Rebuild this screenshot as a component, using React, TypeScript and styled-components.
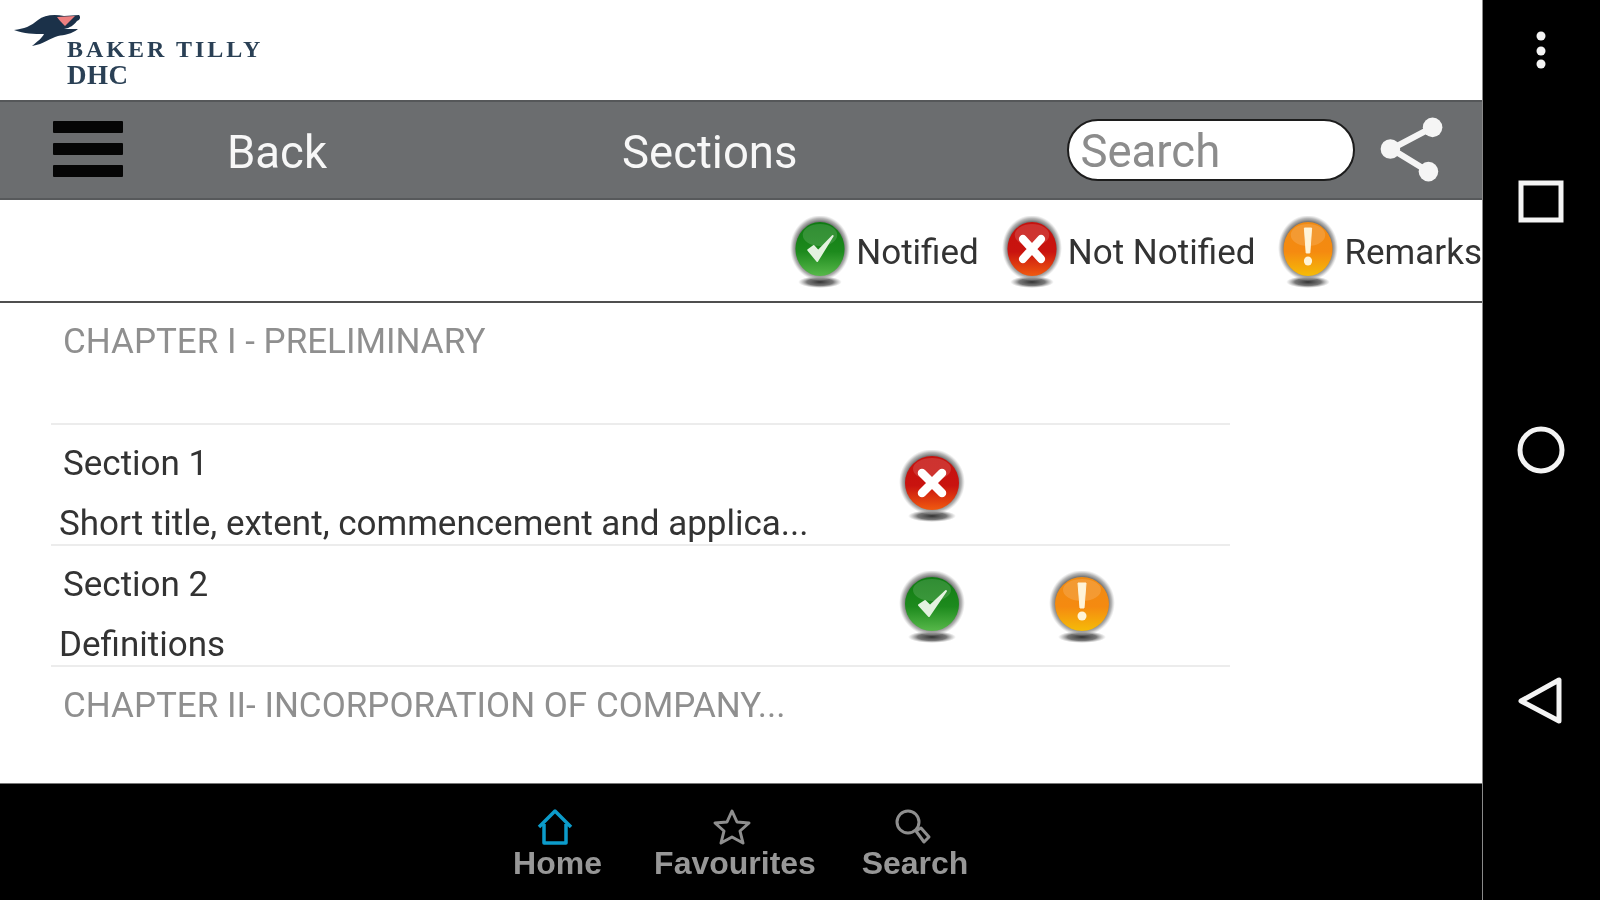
import { FC } from 'react';
import styled, { createGlobalStyle } from 'styled-components';

const GlobalStyle = createGlobalStyle`
  html, body {
    margin: 0;
    padding: 0;
    background: #000;
    overflow: hidden;
  }
`;

const Shell = styled.div`
  width: 1600px;
  height: 900px;
  display: grid;
  grid-template-columns: 1482px 118px;
  font-family: Roboto, "Liberation Sans", sans-serif;
  filter: blur(0.7px);
`;

const Main = styled.div`
  display: flex;
  flex-direction: column;
  background: #fff;
  min-width: 0;
`;

const LogoBar = styled.div`
  height: 100px;
  flex: none;
  display: flex;
  align-items: flex-start;
  padding: 14px 0 0 14px;
  box-sizing: border-box;
`;

const LogoWrap = styled.div`
  display: flex;
  flex-direction: column;
`;

const LogoWords = styled.div`
  margin: -11px 0 0 53px;
  font-family: "Liberation Serif", serif;
  color: #2a4055;
  white-space: nowrap;
  display: flex;
  flex-direction: column;
  gap: 2px;
`;

const LogoLine = styled.div<{ $size: number; $spacing: number }>`
  font-size: ${(p) => p.$size}px;
  letter-spacing: ${(p) => p.$spacing}px;
  line-height: 24px;
  font-weight: 700;
`;

const Toolbar = styled.div`
  height: 100px;
  flex: none;
  box-sizing: border-box;
  display: flex;
  align-items: center;
  background: #6b6d6f;
  border-top: 2px solid #555759;
  border-bottom: 2px solid #57595b;
`;

const Burger = styled.div`
  width: 70px;
  margin: 0 0 2px 53px;
  display: flex;
  flex-direction: column;
  gap: 10px;
`;

const BurgerBar = styled.span`
  display: block;
  height: 12px;
  border-radius: 1px;
  background: #050505;
`;

const ToolbarLabel = styled.div<{ $left: number }>`
  margin-left: ${(p) => p.$left}px;
  padding-top: 6px;
  color: #f7f7f7;
  font-size: 45.5px;
  line-height: 60px;
  white-space: nowrap;
`;

const SearchBox = styled.div`
  margin-left: 270px;
  width: 288px;
  height: 62px;
  box-sizing: border-box;
  border: 2px solid #1c1c1c;
  border-radius: 31px;
  background: #fff;
  color: #8c8c8c;
  font-size: 45.5px;
  line-height: 62px;
  padding-left: 11px;
`;

const ShareIcon = styled.svg`
  margin-left: 22px;
  width: 70px;
  height: 70px;
  flex: none;
`;

const Legend = styled.div`
  height: 103px;
  flex: none;
  box-sizing: border-box;
  display: flex;
  align-items: center;
  justify-content: flex-end;
  border-bottom: 2px solid #4f4f4f;
`;

const LegendItem = styled.div<{ $gap: number }>`
  display: flex;
  align-items: center;
  margin-left: ${(p) => p.$gap}px;
`;

const LegendText = styled.span`
  margin-left: 6px;
  color: #333;
  font-size: 35px;
  white-space: nowrap;
  position: relative;
  top: 2px;
`;

const LegendBadge = styled.div`
  display: flex;
  padding-top: 5px;
`;

const List = styled.div`
  flex: 1;
  min-height: 0;
  width: 1179px;
  margin-left: 51px;
`;

const ChapterRow = styled.div<{ $divider?: boolean; $height: number }>`
  height: ${(p) => p.$height}px;
  box-sizing: border-box;
  padding: 9px 0 0 12px;
  border-top: ${(p) => (p.$divider ? '2px solid #ececec' : 'none')};
  color: #8f8f8f;
  font-size: 35px;
  line-height: 60px;
  white-space: nowrap;
`;

const SectionRow = styled.div`
  height: 121px;
  box-sizing: border-box;
  display: grid;
  grid-template-columns: 846px 150px 70px;
  border-top: 2px solid #ececec;
`;

const SectionText = styled.div`
  padding-top: 9px;
  min-width: 0;
`;

const SectionName = styled.div`
  padding-left: 12px;
  color: #333;
  font-size: 35px;
  line-height: 60px;
  white-space: nowrap;
`;

const SectionTitle = styled.div`
  padding-left: 8px;
  color: #333;
  font-size: 35px;
  line-height: 60px;
  white-space: nowrap;
`;

const StatusCell = styled.div`
  display: flex;
  align-items: center;
  justify-content: center;
  width: 70px;
  padding-bottom: 6px;
`;

const TabBar = styled.div`
  height: 117px;
  flex: none;
  box-sizing: border-box;
  background: #000;
  display: flex;
  justify-content: flex-start;
  padding: 23px 0 0 510px;
  border-top: 1px solid #777;
`;

const Tab = styled.div<{ $width: number }>`
  width: ${(p) => p.$width}px;
  display: flex;
  flex-direction: column;
  align-items: center;
`;

const TabIcon = styled.svg`
  width: 40px;
  height: 40px;
  flex: none;
  margin: 0 6px -1px 0;
`;

const TabLabel = styled.div`
  font-family: "Liberation Sans", Arial, sans-serif;
  font-weight: 700;
  font-size: 32px;
  line-height: 34px;
  color: #979797;
  white-space: nowrap;
`;

const NavRail = styled.div`
  background: #000;
  display: flex;
  flex-direction: column;
  align-items: center;
  border-left: 1px solid #8a8a8a;
  box-sizing: border-box;
  padding-right: 2px;
`;

const NavIcon = styled.svg<{ $top: number }>`
  margin-top: ${(p) => p.$top}px;
  width: 50px;
  height: 50px;
  flex: none;
`;

type Kind = 'ok' | 'no' | 'warn';

const badgeColors: Record<Kind, [string, string, string]> = {
  ok: ['#1d8a1d', '#0f7a12', '#57b84a'],
  no: ['#c9130f', '#c4120e', '#f05a10'],
  warn: ['#f58a10', '#f08a12', '#f5bb08'],
};

const BadgeSvg = styled.svg<{ $narrow?: boolean }>`
  width: ${(p) => (p.$narrow ? 60 : 66)}px;
  height: 74px;
  flex: none;
`;

const Badge: FC<{ kind: Kind; narrow?: boolean }> = ({ kind, narrow }) => {
  const [base, top, bottom] = badgeColors[kind];
  const id = `badge-${kind}`;
  return (
    <BadgeSvg $narrow={narrow} viewBox="0 0 66 74" preserveAspectRatio="none">
      <defs>
        <linearGradient id={id} x1="0" y1="0" x2="0" y2="1">
          <stop offset="0" stopColor={top} />
          <stop offset="0.55" stopColor={base} />
          <stop offset="1" stopColor={bottom} />
        </linearGradient>
        <radialGradient id="badge-shadow" cx="0.5" cy="0.5" r="0.5">
          <stop offset="0" stopColor="#333" />
          <stop offset="0.6" stopColor="#555" stopOpacity="0.8" />
          <stop offset="1" stopColor="#888" stopOpacity="0" />
        </radialGradient>
        <radialGradient id="badge-halo" cx="0.5" cy="0.5" r="0.5">
          <stop offset="0.8" stopColor="#777" />
          <stop offset="0.9" stopColor="#999" stopOpacity="0.7" />
          <stop offset="1" stopColor="#bbb" stopOpacity="0" />
        </radialGradient>
      </defs>
      <ellipse cx="33" cy="66" rx="24" ry="6" fill="url(#badge-shadow)" />
      <circle cx="33" cy="32" r="33" fill="url(#badge-halo)" />
      <circle cx="33" cy="33" r="27" fill={`url(#${id})`} />
      <ellipse cx="33" cy="19" rx="19" ry="11" fill="#fff" opacity="0.14" />
      {kind === 'ok' && (
        <path d="M20 34 L30 45 L47 20 L31 35 L26 30 Z" fill="#e4f2e0" stroke="#e4f2e0" strokeWidth="2" strokeLinejoin="round" />
      )}
      {kind === 'no' && (
        <path d="M23 23 L43 43 M43 23 L23 43" stroke="#fff" strokeWidth="8.5" strokeLinecap="round" />
      )}
      {kind === 'warn' && (
        <>
          <path d="M29 12 L37 12 L35 37 L31 37 Z" fill="#fff4d8" stroke="#fff4d8" strokeLinejoin="round" />
          <circle cx="33" cy="45" r="4.5" fill="#fff4d8" />
        </>
      )}
    </BadgeSvg>
  );
};

const BirdMark = styled.svg`
  width: 70px;
  height: 34px;
  display: block;
`;

const App: FC = () => {
  return (
    <>
      <GlobalStyle />
      <Shell>
        <Main>
          <LogoBar>
            <LogoWrap>
              <BirdMark viewBox="0 0 70 34">
                <path
                  d="M0 16 C10 15 17 12 24 6 C30 1 40 0 50 2 L65 1 C67 3 66 6 63 7 C60 11 56 14 50 15 L64 15 C58 20 50 21 44 22 C36 24 30 30 18 32 C24 27 28 24 30 20 C20 20 10 20 0 16 Z"
                  fill="#1b3149"
                />
                <path d="M43 3 L61 2 L51 12 C48 9 45 6 43 3 Z" fill="#ee8080" />
              </BirdMark>
              <LogoWords>
                <LogoLine $size={24} $spacing={3}>BAKER TILLY</LogoLine>
                <LogoLine $size={27} $spacing={0.5}>DHC</LogoLine>
              </LogoWords>
            </LogoWrap>
          </LogoBar>

          <Toolbar>
            <Burger>
              <BurgerBar />
              <BurgerBar />
              <BurgerBar />
            </Burger>
            <ToolbarLabel $left={104}>Back</ToolbarLabel>
            <ToolbarLabel $left={295}>Sections</ToolbarLabel>
            <SearchBox>Search</SearchBox>
            <ShareIcon viewBox="0 0 68 68">
              <path d="M54 12 L14 33 L50 55" fill="none" stroke="#f5f5f5" strokeWidth="6" />
              <circle cx="54" cy="12" r="9.5" fill="#f5f5f5" />
              <circle cx="13" cy="33" r="9.5" fill="#f5f5f5" />
              <circle cx="50" cy="55" r="9.5" fill="#f5f5f5" />
            </ShareIcon>
          </Toolbar>

          <Legend>
            <LegendItem $gap={0}>
              <LegendBadge>
                <Badge kind="ok" narrow />
              </LegendBadge>
              <LegendText>Notified</LegendText>
            </LegendItem>
            <LegendItem $gap={23}>
              <LegendBadge>
                <Badge kind="no" narrow />
              </LegendBadge>
              <LegendText>Not Notified</LegendText>
            </LegendItem>
            <LegendItem $gap={23}>
              <LegendBadge>
                <Badge kind="warn" narrow />
              </LegendBadge>
              <LegendText>Remarks</LegendText>
            </LegendItem>
          </Legend>

          <List>
            <ChapterRow $height={120}>CHAPTER I - PRELIMINARY</ChapterRow>
            <SectionRow>
              <SectionText>
                <SectionName>Section 1</SectionName>
                <SectionTitle>Short title, extent, commencement and applica...</SectionTitle>
              </SectionText>
              <StatusCell>
                <Badge kind="no" />
              </StatusCell>
            </SectionRow>
            <SectionRow>
              <SectionText>
                <SectionName>Section 2</SectionName>
                <SectionTitle>Definitions</SectionTitle>
              </SectionText>
              <StatusCell>
                <Badge kind="ok" />
              </StatusCell>
              <StatusCell>
                <Badge kind="warn" />
              </StatusCell>
            </SectionRow>
            <ChapterRow $divider $height={116}>CHAPTER II- INCORPORATION OF COMPANY...</ChapterRow>
          </List>

          <TabBar>
            <Tab $width={95}>
              <TabIcon viewBox="0 0 40 40">
                <path d="M4 20 L20 4 L36 20 M9 17 V36 H31 V17" fill="none" stroke="#0c9ccb" strokeWidth="3.5" strokeLinejoin="round" />
              </TabIcon>
              <TabLabel>Home</TabLabel>
            </Tab>
            <Tab $width={260}>
              <TabIcon viewBox="0 0 40 40">
                <path d="M20 4 L25 15 L37 16 L28 24 L31 36 L20 30 L9 36 L12 24 L3 16 L15 15 Z" fill="none" stroke="#8e8e8e" strokeWidth="3" strokeLinejoin="round" />
              </TabIcon>
              <TabLabel>Favourites</TabLabel>
            </Tab>
            <Tab $width={100}>
              <TabIcon viewBox="0 0 40 40">
                <circle cx="16" cy="15" r="11" fill="none" stroke="#8e8e8e" strokeWidth="3" />
                <path d="M24 24 L29 21 L37 30 L32 35 Z" fill="none" stroke="#8e8e8e" strokeWidth="3" strokeLinejoin="round" />
              </TabIcon>
              <TabLabel>Search</TabLabel>
            </Tab>
          </TabBar>
        </Main>

        <NavRail>
          <NavIcon $top={29} viewBox="0 0 50 50">
            <circle cx="25" cy="7" r="4.5" fill="#f4f4f4" />
            <circle cx="25" cy="22" r="4.5" fill="#f4f4f4" />
            <circle cx="25" cy="35" r="4.5" fill="#f4f4f4" />
          </NavIcon>
          <NavIcon $top={99} viewBox="0 0 50 50">
            <rect x="5" y="5" width="40" height="37" fill="none" stroke="#f4f4f4" strokeWidth="5" />
          </NavIcon>
          <NavIcon $top={197} viewBox="0 0 50 50">
            <circle cx="25" cy="25" r="21" fill="none" stroke="#f4f4f4" strokeWidth="5" />
          </NavIcon>
          <NavIcon $top={201} viewBox="0 0 50 50">
            <path d="M43 4 V45 L5 25 Z" fill="none" stroke="#f4f4f4" strokeWidth="5" strokeLinejoin="round" />
          </NavIcon>
        </NavRail>
      </Shell>
    </>
  );
};

export default App;
